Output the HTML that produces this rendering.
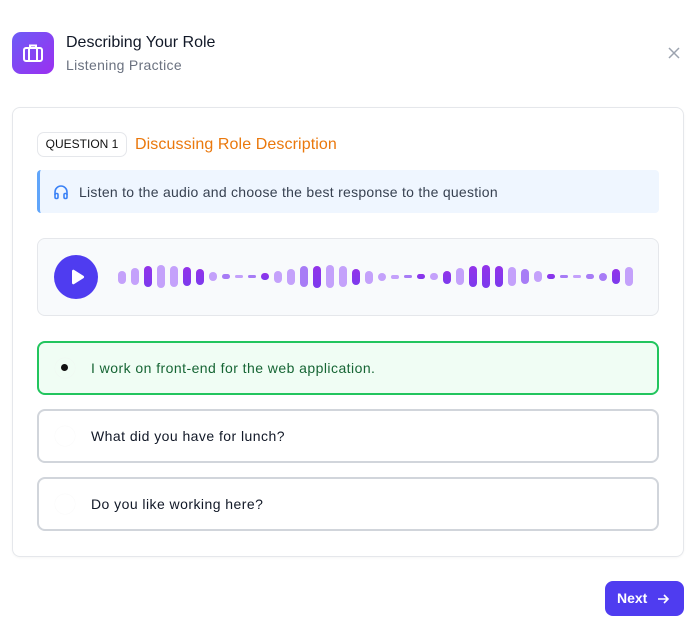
<!DOCTYPE html>
<html><head><style>
*{box-sizing:border-box;margin:0;padding:0}
body{width:697px;height:630px;background:#fff;font-family:"Liberation Sans",sans-serif;position:relative;overflow:hidden;color:#111827}
.a{position:absolute}
.b{position:absolute;width:8px;border-radius:4px}
.l{background:#c4a1fb}.m{background:#a77cf6}.d{background:linear-gradient(#9333ea,#7c3aed)}
.opt{position:absolute;left:37px;width:622px;height:54px;border:2px solid #d1d5db;border-radius:8px;background:#fff}
.opt .r{position:absolute;left:16px;top:15px;width:20px;height:20px;border-radius:50%;background:#fff;box-shadow:0 0 1px #eee}
.opt .t{position:absolute;left:52px;top:17px;font-size:14px;color:#111827;letter-spacing:0.45px}
</style></head><body>
<div class="a" style="left:12px;top:32px;width:42px;height:42px;border-radius:9px;background:linear-gradient(135deg,#6d5cf6,#9b2ff0)">
<svg width="42" height="42" viewBox="0 0 42 42" fill="none" stroke="#fff" stroke-width="2"><rect x="12" y="16" width="18" height="13" rx="2"/><path d="M18 16v-2.5h6V16M17 16v13M25 16v13"/></svg></div>
<div class="a" style="left:66px;top:34px;font-size:16px;color:#111827">Describing Your Role</div>
<div class="a" style="left:66px;top:57px;font-size:14px;color:#6b7280;letter-spacing:0.3px">Listening Practice</div>
<svg class="a" style="left:667px;top:46px" width="14" height="14" viewBox="0 0 14 14" stroke="#9ca3af" stroke-width="1.5"><path d="M2 2l10 10M12 2L2 12"/></svg>
<div class="a" style="left:12px;top:107px;width:672px;height:450px;border:1px solid #e5e7eb;border-radius:8px;box-shadow:0 1px 2px rgba(0,0,0,.04)"></div>
<div class="a" style="left:37px;top:132px;width:90px;height:25px;border:1px solid #e5e7eb;border-radius:7px;font-size:12px;line-height:23px;text-align:center;color:#111">QUESTION 1</div>
<div class="a" style="left:135px;top:136px;font-size:16px;color:#ea780c;letter-spacing:0.1px">Discussing Role Description</div>
<div class="a" style="left:37px;top:170px;width:622px;height:43px;background:#eff6ff;border-left:3px solid #60a5fa;border-radius:4px"></div>
<svg class="a" style="left:53px;top:184px" width="16" height="16" viewBox="0 0 16 16" fill="none" stroke="#3b82f6" stroke-width="1.6"><path d="M2 11V8a6 6 0 0 1 12 0v3"/><rect x="2" y="9.5" width="3" height="5" rx="1.2"/><rect x="11" y="9.5" width="3" height="5" rx="1.2"/></svg>
<div class="a" style="left:79px;top:184px;font-size:14px;color:#374151;letter-spacing:0.27px">Listen to the audio and choose the best response to the question</div>
<div class="a" style="left:37px;top:238px;width:622px;height:78px;background:#f8fafc;border:1px solid #e5e7eb;border-radius:8px"></div>
<div class="a" style="left:54px;top:255px;width:44px;height:44px;border-radius:50%;background:#4f3cf0"></div>
<svg class="a" style="left:54px;top:255px" width="44" height="44" viewBox="0 0 44 44"><path d="M18 16v12a1.3 1.3 0 0 0 2 1.1l9.5-6a1.3 1.3 0 0 0 0-2.2l-9.5-6A1.3 1.3 0 0 0 18 16z" fill="#fff"/></svg>
<div class="b l" style="left:118px;top:271px;height:13px"></div>
<div class="b l" style="left:131px;top:268px;height:17px"></div>
<div class="b d" style="left:144px;top:266px;height:21px"></div>
<div class="b l" style="left:157px;top:265px;height:23px"></div>
<div class="b l" style="left:170px;top:266px;height:21px"></div>
<div class="b d" style="left:183px;top:267px;height:19px"></div>
<div class="b d" style="left:196px;top:269px;height:16px"></div>
<div class="b l" style="left:209px;top:272px;height:9px"></div>
<div class="b m" style="left:222px;top:274px;height:5px"></div>
<div class="b l" style="left:235px;top:275px;height:3px"></div>
<div class="b m" style="left:248px;top:275px;height:3px"></div>
<div class="b d" style="left:261px;top:273px;height:7px"></div>
<div class="b l" style="left:274px;top:271px;height:12px"></div>
<div class="b l" style="left:287px;top:269px;height:16px"></div>
<div class="b m" style="left:300px;top:266px;height:21px"></div>
<div class="b d" style="left:313px;top:266px;height:22px"></div>
<div class="b l" style="left:326px;top:265px;height:23px"></div>
<div class="b l" style="left:339px;top:266px;height:21px"></div>
<div class="b d" style="left:352px;top:269px;height:16px"></div>
<div class="b l" style="left:365px;top:271px;height:13px"></div>
<div class="b l" style="left:378px;top:273px;height:8px"></div>
<div class="b l" style="left:391px;top:275px;height:4px"></div>
<div class="b m" style="left:404px;top:275px;height:3px"></div>
<div class="b d" style="left:417px;top:274px;height:5px"></div>
<div class="b l" style="left:430px;top:273px;height:7px"></div>
<div class="b d" style="left:443px;top:271px;height:13px"></div>
<div class="b l" style="left:456px;top:268px;height:17px"></div>
<div class="b d" style="left:469px;top:266px;height:21px"></div>
<div class="b d" style="left:482px;top:265px;height:23px"></div>
<div class="b d" style="left:495px;top:266px;height:21px"></div>
<div class="b l" style="left:508px;top:267px;height:19px"></div>
<div class="b m" style="left:521px;top:269px;height:15px"></div>
<div class="b l" style="left:534px;top:271px;height:11px"></div>
<div class="b d" style="left:547px;top:274px;height:5px"></div>
<div class="b m" style="left:560px;top:275px;height:3px"></div>
<div class="b l" style="left:573px;top:275px;height:3px"></div>
<div class="b m" style="left:586px;top:274px;height:5px"></div>
<div class="b m" style="left:599px;top:273px;height:8px"></div>
<div class="b d" style="left:612px;top:269px;height:15px"></div>
<div class="b l" style="left:625px;top:267px;height:19px"></div>
<div class="opt" style="top:341px;border-color:#22c55e;background:#f0fdf4"><div class="r" style="background:#f0fdf4"></div><div class="a" style="left:22px;top:21px;width:7px;height:7px;border-radius:50%;background:#111"></div><div class="t" style="color:#166534">I work on front-end for the web application.</div></div>
<div class="opt" style="top:409px"><div class="r"></div><div class="t">What did you have for lunch?</div></div>
<div class="opt" style="top:477px"><div class="r"></div><div class="t">Do you like working here?</div></div>
<div class="a" style="left:605px;top:581px;width:79px;height:35px;border-radius:8px;background:#4f3cf0;color:#fff;font-size:14px;font-weight:bold;line-height:35px;padding-left:12px">Next</div>
<svg class="a" style="left:656px;top:592px" width="14" height="14" viewBox="0 0 14 14" fill="none" stroke="#fff" stroke-width="1.6"><path d="M2 7h10M8 3l4 4-4 4"/></svg>
</body></html>
